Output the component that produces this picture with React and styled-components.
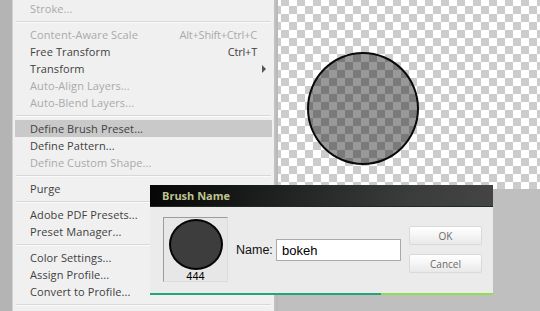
import React from "react";
import styled, { createGlobalStyle } from "styled-components";

const Global = createGlobalStyle`
  html, body { margin: 0; padding: 0; width: 540px; height: 311px; overflow: hidden; background: #bfbfbf; }
  #root { width: 540px; height: 311px; }
`;

const Page = styled.div`
  position: relative;
  display: flex;
  width: 540px;
  height: 311px;
  overflow: hidden;
  font-family: "Open Sans", "Noto Sans", sans-serif;
`;

const LeftStrip = styled.div`
  width: 12px;
  flex: none;
  background: #b4b4b4;
  border-right: 1px solid #d2d2d2;
`;

const Menu = styled.div`
  width: 261px;
  flex: none;
  background: #f0f0f0;
  display: flex;
  flex-direction: column;
`;

const Item = styled.div`
  height: 17px;
  margin: 0 2px;
  padding: 0 15px;
  display: flex;
  align-items: center;
  justify-content: space-between;
  font-size: 11px;
  letter-spacing: 0.1px;
  color: ${(p) => (p.$disabled ? "#aaaaaa" : "#414141")};
  background: ${(p) => (p.$active ? "#c9c9c9" : "transparent")};
  white-space: nowrap;
`;

const Shortcut = styled.span`
  font-size: 11px;
  letter-spacing: -0.2px;
`;

const Arrow = styled.span`
  width: 0;
  height: 0;
  border-top: 4px solid transparent;
  border-bottom: 4px solid transparent;
  border-left: 4px solid #555;
  margin-right: -9px;
`;

const Separator = styled.div`
  height: 9px;
  margin: 0 3px;
  display: flex;
  flex-direction: column;
  justify-content: center;
  &::before {
    content: "";
    display: block;
    height: 1px;
    background: #d8d8d8;
    border-bottom: 1px solid #fbfbfb;
  }
`;

const Shadow = styled.div`
  width: 4px;
  flex: none;
  background: linear-gradient(to right, #c4c4c4, #b6b6b6);
`;

const RightCol = styled.div`
  flex: 1;
  display: flex;
  flex-direction: column;
  background: #bfbfbf;
`;

const Canvas = styled.div`
  position: relative;
  height: 189px;
  background-color: #ffffff;
  background-image: linear-gradient(45deg, #cccccc 25%, transparent 25%, transparent 75%, #cccccc 75%),
    linear-gradient(45deg, #cccccc 25%, transparent 25%, transparent 75%, #cccccc 75%);
  background-size: 16px 16px;
  background-position: 3px 6px, 11px 14px;
`;

const Shape = styled.div`
  position: absolute;
  left: 29px;
  top: 52px;
  width: 108px;
  height: 109px;
  border-radius: 50%;
  border: 2px solid #0a0a0a;
  background: rgba(0, 0, 0, 0.4);
`;

const Dialog = styled.div`
  position: absolute;
  left: 150px;
  top: 185px;
  width: 343px;
  display: flex;
  flex-direction: column;
`;

const TitleBar = styled.div`
  height: 22px;
  display: flex;
  align-items: center;
  padding-left: 12px;
  background: linear-gradient(to right, #050605 0%, #1e2020 35%, #3a3b3b 75%, #444 100%);
  border-bottom: 1px solid #1d2a22;
  box-sizing: border-box;
  font-family: "Open Sans", sans-serif;
  font-weight: bold;
  font-size: 11px;
  color: #bfc38e;
`;

const Body = styled.div`
  height: 86px;
  background: #ebebeb;
  display: flex;
  align-items: flex-start;
  padding: 10px 0 0 13px;
  box-sizing: border-box;
`;

const BottomLine = styled.div`
  height: 2px;
  background: linear-gradient(to right, #23a57c 0, #23a57c 231px, #8fe04e 231px, #8fe04e 100%);
`;

const Preview = styled.div`
  width: 65px;
  height: 65px;
  box-sizing: border-box;
  border-top: 1px solid #9c9c9c;
  border-left: 1px solid #9c9c9c;
  border-right: 1px solid #dcdcdc;
  border-bottom: 1px solid #dcdcdc;
  background: #e7e7e7;
  display: flex;
  flex-direction: column;
  align-items: center;
  padding-top: 1px;
`;

const BrushDot = styled.div`
  width: 50px;
  height: 50px;
  border-radius: 50%;
  background: #3d3d3d;
  border: 2px solid #050505;
`;

const Size = styled.div`
  font-family: "Liberation Sans", Arial, sans-serif;
  font-size: 11px;
  line-height: 10px;
  color: #000;
  margin-top: 1px;
`;

const NameGroup = styled.div`
  display: flex;
  align-items: center;
  gap: 6px;
  margin: 22px 0 0 8px;
`;

const Label = styled.span`
  width: 34px;
  font-family: "Liberation Sans", Arial, sans-serif;
  font-size: 12.5px;
  color: #111;
  white-space: nowrap;
`;

const Input = styled.div`
  width: 125px;
  height: 22px;
  box-sizing: border-box;
  border: 1px solid #a9a9a9;
  background: #fff;
  padding-left: 5px;
  display: flex;
  align-items: center;
  font-family: "Liberation Sans", Arial, sans-serif;
  font-size: 13px;
  color: #000;
`;

const Buttons = styled.div`
  display: flex;
  flex-direction: column;
  gap: 9px;
  margin: 9px 0 0 8px;
`;

const Button = styled.div`
  width: 73px;
  height: 19px;
  box-sizing: border-box;
  border: 1px solid #dadada;
  border-radius: 2px;
  background: linear-gradient(to bottom, #ffffff 0%, #f6f6f6 45%, #e9e9e9 100%);
  display: flex;
  align-items: center;
  justify-content: center;
  font-size: 10px;
  color: #6a6a6a;
`;

const items = [
  { t: "Stroke...", d: true },
  { sep: true },
  { t: "Content-Aware Scale", d: true, s: "Alt+Shift+Ctrl+C" },
  { t: "Free Transform", s: "Ctrl+T" },
  { t: "Transform", arrow: true },
  { t: "Auto-Align Layers...", d: true },
  { t: "Auto-Blend Layers...", d: true },
  { sep: true },
  { t: "Define Brush Preset...", active: true },
  { t: "Define Pattern..." },
  { t: "Define Custom Shape...", d: true },
  { sep: true },
  { t: "Purge", arrow: true },
  { sep: true },
  { t: "Adobe PDF Presets..." },
  { t: "Preset Manager..." },
  { sep: true },
  { t: "Color Settings..." },
  { t: "Assign Profile..." },
  { t: "Convert to Profile..." },
  { sep: true },
];

export default function App() {
  return (
    <Page>
      <Global />
      <LeftStrip />
      <Menu>
        {items.map((it, i) =>
          it.sep ? (
            <Separator key={i} />
          ) : (
            <Item key={i} $disabled={it.d} $active={it.active}>
              <span>{it.t}</span>
              {it.s && <Shortcut>{it.s}</Shortcut>}
              {it.arrow && <Arrow />}
            </Item>
          )
        )}
      </Menu>
      <Shadow />
      <RightCol>
        <Canvas>
          <Shape />
        </Canvas>
      </RightCol>
      <Dialog>
        <TitleBar>Brush Name</TitleBar>
        <Body>
          <Preview>
            <BrushDot />
            <Size>444</Size>
          </Preview>
          <NameGroup>
            <Label>Name:</Label>
            <Input>bokeh</Input>
          </NameGroup>
          <Buttons>
            <Button>OK</Button>
            <Button>Cancel</Button>
          </Buttons>
        </Body>
        <BottomLine />
      </Dialog>
    </Page>
  );
}
